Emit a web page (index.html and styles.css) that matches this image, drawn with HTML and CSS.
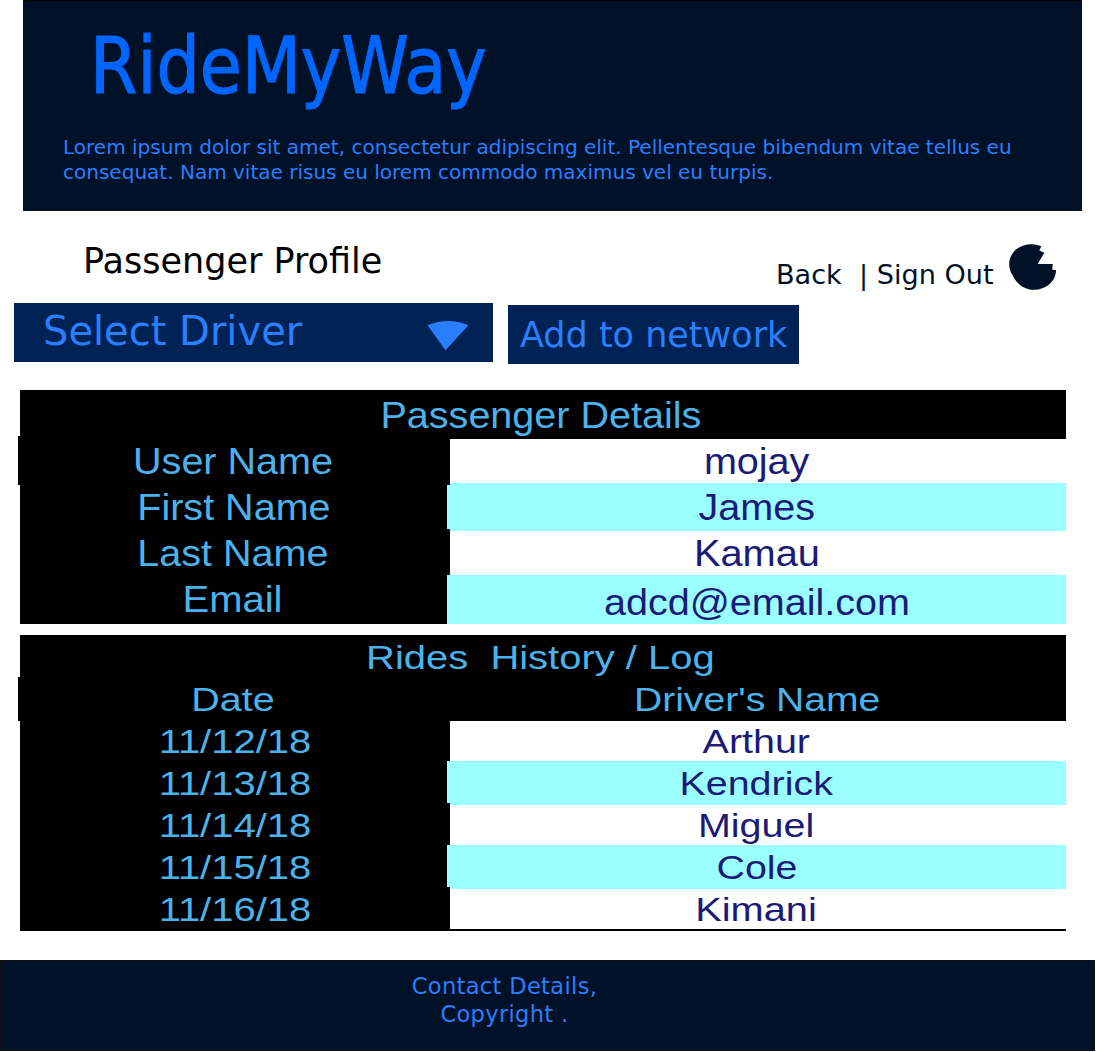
FILE: index.html
```
<!DOCTYPE html>
<html lang="en">
<head>
<meta charset="utf-8">
<title>RideMyWay - Passenger Profile</title>
<link rel="stylesheet" href="styles.css">
</head>
<body>
<header class="banner">
  <h1 class="logo">RideMyWay</h1>
  <p class="intro">Lorem ipsum dolor sit amet, consectetur adipiscing elit. Pellentesque bibendum vitae tellus eu<br>consequat. Nam vitae risus eu lorem commodo maximus vel eu turpis.</p>
</header>

<div class="profile-bar">
  <h2 class="page-title">Passenger Profile</h2>
  <nav class="session">Back&nbsp; | Sign Out</nav>
  <svg class="avatar" width="50" height="50" viewBox="0 0 50 50" aria-hidden="true">
    <path d="M33.3 5.3C26 1.6 13 2.2 6 10.5C-0.5 18 0 28 4.7 34.5C9 44 17.5 48.8 25.5 48.8C38 48.8 48 40.5 48 29L44.3 28.7L44.7 23L29.7 23L36.3 11.8L31.3 9.6Z"/>
  </svg>
</div>

<div class="actions">
  <button class="select">Select Driver
    <svg class="caret" width="42" height="32" viewBox="0 0 42 32" aria-hidden="true"><path d="M0.5 5.3Q21.5 -3.3 41.5 5.3L18.5 30.3Z"/></svg>
  </button>
  <button class="add">Add to network</button>
</div>

<section class="table details">
  <h3 class="heading"><span>Passenger Details</span></h3>
  <div class="columns">
    <div class="labels">
      <div><span>User Name</span></div>
      <div><span>First Name</span></div>
      <div><span>Last Name</span></div>
      <div><span>Email</span></div>
    </div>
    <div class="values">
      <div><span>mojay</span></div>
      <div><span>James</span></div>
      <div><span>Kamau</span></div>
      <div><span>adcd@email.com</span></div>
    </div>
  </div>
</section>

<section class="table history">
  <h3 class="heading"><span>Rides&nbsp; History / Log</span></h3>
  <div class="columns">
    <div class="labels">
      <div><span>Date</span></div>
      <div><span>11/12/18</span></div>
      <div><span>11/13/18</span></div>
      <div><span>11/14/18</span></div>
      <div><span>11/15/18</span></div>
      <div><span>11/16/18</span></div>
    </div>
    <div class="values">
      <div class="head"><span>Driver's Name</span></div>
      <div><span>Arthur</span></div>
      <div><span>Kendrick</span></div>
      <div><span>Miguel</span></div>
      <div><span>Cole</span></div>
      <div><span>Kimani</span></div>
    </div>
  </div>
</section>

<footer class="footer">
  <p>Contact Details,<br>Copyright .</p>
</footer>
</body>
</html>
```
FILE: styles.css
```
* { box-sizing: border-box; }

body {
  margin: 0;
  background: #fff;
  font-family: "DejaVu Sans", sans-serif;
  color: #001128;
}

h1, h2, h3, p { margin: 0; font-weight: normal; }

.banner {
  width: 1059px;
  height: 211px;
  margin-left: 23px;
  padding: 15px 0 0 40px;
  background: #001128;
  border-top: 1px solid #000;
  border-bottom: 1px solid #10131a;
}

.logo {
  margin-left: 27px;
  font-size: 79px;
  line-height: 100px;
  color: #06f;
  -webkit-text-stroke: 1.2px #06f;
  transform: scaleX(.865);
  transform-origin: left;
}

.intro {
  margin-top: 19px;
  font-size: 20.03px;
  line-height: 25px;
  color: #2a7fff;
  white-space: nowrap;
}

.profile-bar {
  display: flex;
  align-items: flex-start;
  height: 92px;
}

.page-title {
  width: 693px;
  margin: 30px 0 0 83px;
  font-size: 35px;
  line-height: 40px;
  color: #000;
}

.session {
  width: 232px;
  margin-top: 44px;
  font-size: 27.1px;
  line-height: 40px;
  white-space: pre;
}

.avatar { margin-top: 30px; fill: #001128; }

.actions {
  display: flex;
  align-items: flex-start;
  gap: 15px;
  margin-left: 14px;
}

.actions button {
  height: 59px;
  border: 0;
  padding: 0;
  background: #025;
  color: #2a7fff;
  font-family: inherit;
  text-align: left;
  white-space: nowrap;
}

.actions .select {
  display: flex;
  justify-content: space-between;
  width: 479px;
  padding: 0 24.5px 0 29px;
  font-size: 40px;
  line-height: 56px;
}

.caret { margin-top: 17px; fill: #2a7fff; }

.actions .add {
  width: 291px;
  margin-top: 2px;
  padding-left: 12px;
  font-size: 35px;
  line-height: 61px;
}

.table {
  position: relative;
  width: 1046px;
  margin-left: 20px;
  background: #000;
  color: #4cb2ec;
  font-family: "Liberation Sans", Arial, sans-serif;
  white-space: nowrap;
}

.table span {
  display: inline-block;
  transform: scaleX(var(--stretch));
}

.heading { padding-right: 4px; font-size: inherit; text-align: center; }

.columns { display: flex; }

.labels { width: 430px; text-align: center; }

.labels div { padding-right: 4px; }

.values { width: 616px; }

.values div {
  display: flex;
  align-items: center;
  justify-content: center;
  height: var(--plain);
  padding-right: 3px;
  background: #fff;
  color: #1a1a78;
}

/* the tinted cells reach three pixels into the label column */
.details .values div:nth-child(even),
.history .values div:nth-child(odd):not(.head) {
  height: var(--tinted);
  margin-left: -3px;
  padding-right: 0;
  background: #9ff;
  clip-path: polygon(3px 0, 100% 0, 100% 100%, 3px 100%, 3px calc(100% - 2px), 0 calc(100% - 2px), 0 var(--notch), 3px var(--notch));
}

.table::before {
  content: "";
  position: absolute;
  left: -2px;
  top: var(--tab-top);
  width: 2px;
  height: var(--tab-height);
  background: #000;
}

.details {
  --stretch: 1.063;
  --plain: 44px;
  --tinted: 48px;
  --notch: 2px;
  --tab-top: 46px;
  --tab-height: 49px;
  height: 234px;
  margin-top: 26px;
  font-size: 37.2px;
}

.details .heading { height: 48px; line-height: 50px; }
.details .labels div { height: 46px; line-height: 46px; }
.details .values { padding-top: 1px; }
.details .labels div:nth-child(2) { padding-right: 2px; }
.details .labels div:nth-child(4) { --stretch: 1.075; padding-right: 6px; }
.details .values div:nth-child(3) { --stretch: 1.07; }
.details .values div:nth-child(4) { padding-top: 5px; clip-path: none; height: 49px; }

.history {
  --stretch: 1.16;
  --plain: 40px;
  --tinted: 44px;
  --notch: 0px;
  --tab-top: 42px;
  --tab-height: 44px;
  height: 296px;
  margin-top: 11px;
  font-size: 34px;
}

.history .heading { height: 43px; padding-right: 6px; line-height: 45px; --stretch: 1.175; }
.history .labels div { height: 42px; line-height: 42px; }
.history .labels div:nth-child(n+2) { --stretch: 1.175; padding-right: 1px; }
.history .values div.head { height: 43px; padding-right: 1px; padding-bottom: 1px; background: #000; color: inherit; --stretch: 1.15; }
.history .values div:nth-child(6) { --stretch: 1.17; padding-right: 4px; }

.footer {
  height: 91px;
  width: 1095px;
  margin-top: 29px;
  padding-top: 11px;
  background: #001128;
  border: 1px solid #0a0f14;
  color: #2a7fff;
}

.footer p {
  width: 1007px;
  font-size: 22.5px;
  line-height: 28px;
  letter-spacing: .35px;
  text-align: center;
}
```
